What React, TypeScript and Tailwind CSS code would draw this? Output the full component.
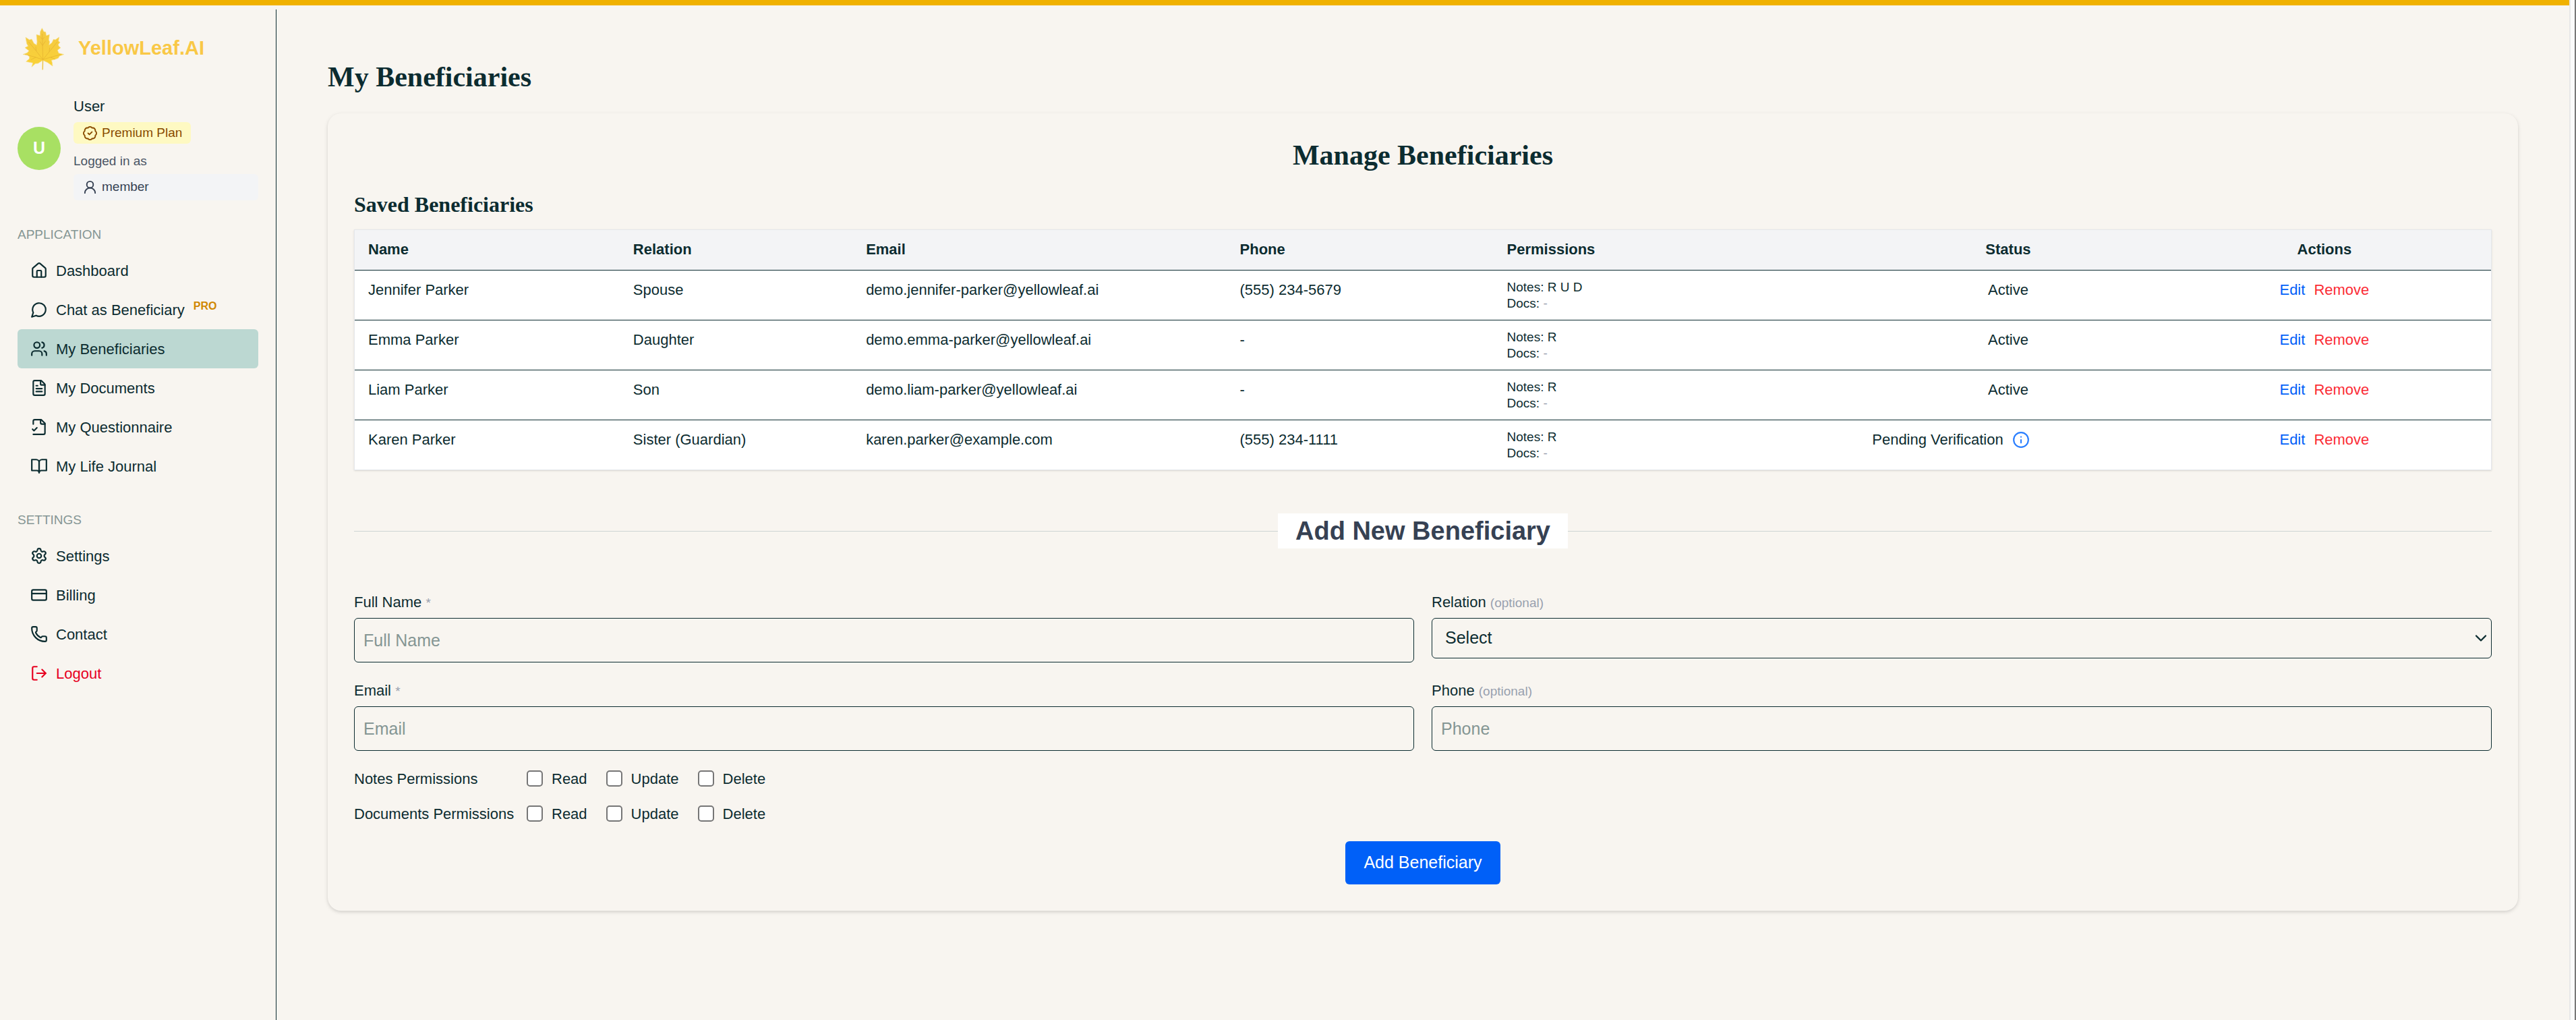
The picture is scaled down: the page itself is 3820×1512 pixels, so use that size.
import { FormEvent, ReactNode, SVGProps, useState } from 'react';
import {
  BadgeCheck,
  ChevronDown,
  CreditCard,
  FileText,
  House,
  Info,
  LogOut,
  Phone,
  Settings,
  UserRound,
  Users
} from 'lucide-react';

interface Beneficiary {
  name: string;
  relation: string;
  email: string;
  phone: string;
  notes: string;
  docs: string;
  status: 'Active' | 'Pending Verification';
}

const beneficiaries: Beneficiary[] = [
  { name: 'Jennifer Parker', relation: 'Spouse', email: 'demo.jennifer-parker@yellowleaf.ai', phone: '(555) 234-5679', notes: 'R U D', docs: '', status: 'Active' },
  { name: 'Emma Parker', relation: 'Daughter', email: 'demo.emma-parker@yellowleaf.ai', phone: '', notes: 'R', docs: '', status: 'Active' },
  { name: 'Liam Parker', relation: 'Son', email: 'demo.liam-parker@yellowleaf.ai', phone: '', notes: 'R', docs: '', status: 'Active' },
  { name: 'Karen Parker', relation: 'Sister (Guardian)', email: 'karen.parker@example.com', phone: '(555) 234-1111', notes: 'R', docs: '', status: 'Pending Verification' }
];

function StrokeIcon({ children, ...props }: SVGProps<SVGSVGElement>) {
  return (
    <svg
      viewBox="0 0 24 24"
      width={26}
      height={26}
      fill="none"
      stroke="currentColor"
      strokeWidth={2}
      strokeLinecap="round"
      strokeLinejoin="round"
      aria-hidden="true"
      {...props}
    >
      {children}
    </svg>
  );
}

function ChatIcon() {
  return (
    <StrokeIcon>
      <path d="M7.9 20A9 9 0 1 0 4 16.1L2 22Z" />
    </StrokeIcon>
  );
}

function QuestionnaireIcon() {
  return (
    <StrokeIcon>
      <path d="M4 22h14a2 2 0 0 0 2-2V7l-5-5H6a2 2 0 0 0-2 2v4" />
      <path d="M14 2v4a2 2 0 0 0 2 2h4" />
      <path d="m3 15 2 2 4-4" />
    </StrokeIcon>
  );
}

function JournalIcon() {
  return (
    <StrokeIcon>
      <path d="M2 3h6a4 4 0 0 1 4 4v14a3 3 0 0 0-3-3H2z" />
      <path d="M22 3h-6a4 4 0 0 0-4 4v14a3 3 0 0 1 3-3h7z" />
    </StrokeIcon>
  );
}

function LeafLogo() {
  return (
    <svg viewBox="0 0 192 192" width={64} height={64} aria-hidden="true">
      <defs>
        <linearGradient id="leaf" x1="0" y1="0" x2="0" y2="1">
          <stop offset="0" stopColor="#f3c843" />
          <stop offset="1" stopColor="#fbd336" />
        </linearGradient>
      </defs>
      <path
        d="M88 5 96 21 104 22 107 38 121 34 118 58 122 66 119 80 132 70 139 55 147 57 164 45 161 63 168 68 160 78 163 86 171 92 157 103 162 116 185 122 166 129 160 139 144 145 130 148 133 158 135 174 113 158 93 149 92 190 89 190 90 149 70 162 58 163 42 178 47 160 17 154 31 142 32 132 22 124 3 122 22 115 30 106 12 92 26 85 20 74 15 46 32 57 42 54 52 73 64 80 66 66 63 34 79 38 80 21Z"
        fill="url(#leaf)"
        stroke="#f5e08a"
        strokeWidth="2"
      />
      <g fill="none" stroke="#dda52c" strokeWidth="2" opacity="0.7">
        <path d="M91 188 92 145 89 30M92 145 60 104 28 66M92 145 122 108 156 66M92 145 50 132 12 122M92 145 134 132 174 122" />
        <path d="M90 82 78 64M90 82 104 62M62 106 60 88M120 110 122 92M60 135 38 146M126 135 146 142M90 55 82 46M90 55 98 46" />
      </g>
    </svg>
  );
}

interface NavItemProps {
  icon: ReactNode;
  label: string;
  active?: boolean;
  pro?: boolean;
}

function NavItem({ icon, label, active, pro }: NavItemProps) {
  return (
    <li>
      <a
        href="#"
        aria-current={active ? 'page' : undefined}
        className={`flex h-[58px] items-center gap-3 rounded-md px-[19px] ${active ? 'bg-[#bcd8d2]' : ''}`}
      >
        {icon}
        <span>
          {label}
          {pro && <sup className="ml-[13px] text-[16px] font-bold text-[#d08700]">PRO</sup>}
        </span>
      </a>
    </li>
  );
}

function Sidebar() {
  return (
    <aside className="mt-1.5 w-[410px] shrink-0 border-r border-[#0c2c30] px-[26px] pt-[26px]">
      <a href="#" className="flex items-center gap-[19px] pl-[7px] text-[29px] font-bold text-[#f9c846]">
        <LeafLogo />
        YellowLeaf.AI
      </a>

      <div className="mt-[38px] flex items-center gap-[19px]">
        <div className="flex size-16 shrink-0 items-center justify-center rounded-full bg-[#a8e063] text-[25px] font-bold text-white">
          U
        </div>
        <div className="flex-1">
          <p className="leading-8">User</p>
          <p className="mt-[7px] flex h-8 w-fit items-center gap-1.5 rounded-md bg-yellow-100 px-[13px] text-[19px] text-[#894b00]">
            <BadgeCheck size={23} />
            Premium Plan
          </p>
          <p className="mt-[13px] text-[19px] leading-[26px] text-[#4a5565]">Logged in as</p>
          <p className="mt-1.5 flex h-[39px] items-center gap-1.5 rounded-md bg-gray-100 px-[13px] text-[19px] text-[#364153]">
            <UserRound size={23} />
            member
          </p>
        </div>
      </div>

      <nav className="mt-[38px]">
        <h2 className="text-[19px] leading-[26px] text-[#859694]">APPLICATION</h2>
        <ul className="mt-[11px]">
          <NavItem icon={<House size={26} />} label="Dashboard" />
          <NavItem icon={<ChatIcon />} label="Chat as Beneficiary" pro />
          <NavItem icon={<Users size={26} />} label="My Beneficiaries" active />
          <NavItem icon={<FileText size={26} />} label="My Documents" />
          <NavItem icon={<QuestionnaireIcon />} label="My Questionnaire" />
          <NavItem icon={<JournalIcon />} label="My Life Journal" />
        </ul>

        <h2 className="mt-[38px] text-[19px] leading-[26px] text-[#859694]">SETTINGS</h2>
        <ul className="mt-[11px]">
          <NavItem icon={<Settings size={26} />} label="Settings" />
          <NavItem icon={<CreditCard size={26} />} label="Billing" />
          <NavItem icon={<Phone size={26} />} label="Contact" />
          <li>
            <button type="button" className="flex h-[58px] w-full items-center gap-3 px-[19px] text-[#e7001f]">
              <LogOut size={26} />
              Logout
            </button>
          </li>
        </ul>
      </nav>
    </aside>
  );
}

const headClass = 'border-b border-[#0c2c30] px-5 pt-[13px] pb-3.5';
const cellClass = 'border-b border-[#0c2c30] px-5 pt-[13px] pb-3 group-last:border-b-0';

function BeneficiaryTable() {
  return (
    <div className="border border-gray-200 bg-white shadow-sm">
      <table className="w-full table-fixed border-separate border-spacing-0 text-left leading-8">
        <colgroup>
          <col className="w-[12.4%]" />
          <col className="w-[10.9%]" />
          <col className="w-[17.5%]" />
          <col className="w-[12.5%]" />
          <col className="w-[17.1%]" />
          <col className="w-[14%]" />
          <col className="w-[15.6%]" />
        </colgroup>
        <thead className="bg-gray-100">
          <tr>
            <th className={headClass}>Name</th>
            <th className={headClass}>Relation</th>
            <th className={headClass}>Email</th>
            <th className={headClass}>Phone</th>
            <th className={headClass}>Permissions</th>
            <th className={`${headClass} text-center`}>Status</th>
            <th className={`${headClass} text-center`}>Actions</th>
          </tr>
        </thead>
        <tbody>
          {beneficiaries.map((b) => (
            <tr key={b.email} className="group align-top">
              <td className={cellClass}>{b.name}</td>
              <td className={cellClass}>{b.relation}</td>
              <td className={cellClass}>{b.email}</td>
              <td className={cellClass}>{b.phone || '-'}</td>
              <td className={`${cellClass} text-[19px] leading-6`}>
                <div>Notes: {b.notes}</div>
                <div>
                  Docs: {b.docs || <span className="text-gray-400">-</span>}
                </div>
              </td>
              <td className={`${cellClass} text-center`}>
                {b.status === 'Active' ? (
                  b.status
                ) : (
                  <div className="flex items-center gap-[13px]">
                    {b.status}
                    <Info size={26} className="text-[#2b7fff]" />
                  </div>
                )}
              </td>
              <td className={cellClass}>
                <div className="flex justify-center gap-[13px]">
                  <button type="button" className="text-[#0060f8]">Edit</button>
                  <button type="button" className="text-[#fb2c36]">Remove</button>
                </div>
              </td>
            </tr>
          ))}
        </tbody>
      </table>
    </div>
  );
}

interface FieldProps {
  id: string;
  label: string;
  hint: string;
  children: ReactNode;
}

function Field({ id, label, hint, children }: FieldProps) {
  return (
    <div>
      <label htmlFor={id} className="mb-[7px] block leading-[31px]">
        {label} <span className="text-[19px] text-gray-400">{hint}</span>
      </label>
      {children}
    </div>
  );
}

const inputClass =
  'block h-[66px] w-full rounded-md border border-[#0c2c30] bg-transparent px-[13px] text-[25px] placeholder:text-[#859694]';

function PermissionRow({ label, name }: { label: string; name: string }) {
  return (
    <div role="group" aria-labelledby={`${name}-permissions`} className="flex h-[30px] items-center gap-[13px]">
      <span id={`${name}-permissions`} className="w-[243px] whitespace-nowrap">
        {label}
      </span>
      <div className="flex gap-7">
        {['Read', 'Update', 'Delete'].map((permission) => (
          <label key={permission} className="flex items-center gap-[13px]">
            <input
              type="checkbox"
              name={`${name}-${permission.toLowerCase()}`}
              className="size-6 appearance-none rounded-[5px] border-2 border-[#767676] bg-white checked:bg-[#0060f8]"
            />
            {permission}
          </label>
        ))}
      </div>
    </div>
  );
}

function AddBeneficiaryForm() {
  const [form, setForm] = useState({ name: '', relation: '', email: '', phone: '' });

  const update = (key: keyof typeof form, value: string) => setForm({ ...form, [key]: value });

  const handleSubmit = (event: FormEvent) => {
    event.preventDefault();
  };

  return (
    <form onSubmit={handleSubmit} className="flex flex-col">
      <div className="grid grid-cols-2 gap-[26px]">
        <Field id="name" label="Full Name" hint="*">
          <input id="name" value={form.name} onChange={(e) => update('name', e.target.value)} placeholder="Full Name" className={inputClass} />
        </Field>
        <Field id="relation" label="Relation" hint="(optional)">
          <div className="relative">
            <select
              id="relation"
              value={form.relation}
              onChange={(e) => update('relation', e.target.value)}
              className="block h-[60px] w-full appearance-none rounded-md border border-[#0c2c30] bg-transparent px-[19px] text-[25px]"
            >
              <option value="">Select</option>
              <option value="spouse">Spouse</option>
              <option value="daughter">Daughter</option>
              <option value="son">Son</option>
            </select>
            <ChevronDown size={28} className="pointer-events-none absolute top-4 right-0.5" />
          </div>
        </Field>
        <Field id="email" label="Email" hint="*">
          <input id="email" type="email" value={form.email} onChange={(e) => update('email', e.target.value)} placeholder="Email" className={inputClass} />
        </Field>
        <Field id="phone" label="Phone" hint="(optional)">
          <input id="phone" type="tel" value={form.phone} onChange={(e) => update('phone', e.target.value)} placeholder="Phone" className={inputClass} />
        </Field>
      </div>

      <div className="mt-[26px] space-y-[22px]">
        <PermissionRow label="Notes Permissions" name="notes" />
        <PermissionRow label="Documents Permissions" name="documents" />
      </div>

      <button type="submit" className="mt-[26px] h-16 self-center rounded-md bg-[#0060f8] px-[27px] text-[25px] text-white">
        Add Beneficiary
      </button>
    </form>
  );
}

export default function App() {
  return (
    <div className="flex min-h-screen bg-[#f8f5f0] font-['Liberation_Sans',Arial,sans-serif] text-[22px] text-[#0c2c30]">
      <div className="flex min-w-0 flex-1 flex-col">
        <div className="h-2 bg-[#f0b100]" />
        <div className="flex flex-1">
          <Sidebar />
          <main className="min-w-0 flex-1 px-[76px] pt-[83px] pb-20">
            <h1 className="font-['Liberation_Serif',serif] text-[42px] leading-[46px] font-bold">My Beneficiaries</h1>

            <section className="mt-[31px] rounded-[20px] p-[39px] shadow-[0_2px_6px_rgba(0,0,0,0.1),0_2px_4px_rgba(0,0,0,0.06)]">
              <h2 className="text-center font-['Liberation_Serif',serif] text-[42px] leading-[46px] font-bold">
                Manage Beneficiaries
              </h2>
              <h3 className="mt-8 mb-[19px] font-['Liberation_Serif',serif] text-[32px] leading-9 font-bold">
                Saved Beneficiaries
              </h3>
              <BeneficiaryTable />

              <div className="my-16 flex items-center">
                <div className="flex-1 border-t border-[#ced5d3]" />
                <h2 className="bg-white px-[26px] text-[38px] leading-[52px] font-bold text-[#364153]">Add New Beneficiary</h2>
                <div className="flex-1 border-t border-[#ced5d3]" />
              </div>

              <AddBeneficiaryForm />
            </section>
          </main>
        </div>
      </div>
      {/* scroll track */}
      <div className="w-2.5 shrink-0 border-r-2 border-l-2 border-r-[#777777] border-l-[#e8e8e8] bg-[#fafafa]" />
    </div>
  );
}
